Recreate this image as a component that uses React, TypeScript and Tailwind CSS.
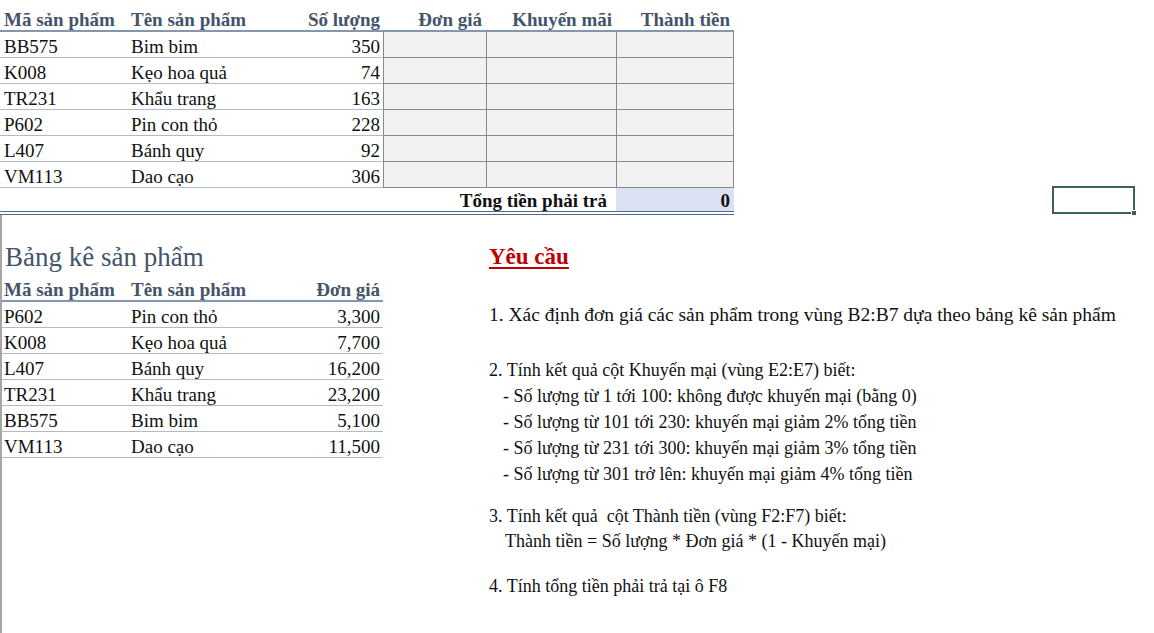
const orders = [
  { code: "BB575", name: "Bim bim", qty: "350" },
  { code: "K008", name: "Kẹo hoa quả", qty: "74" },
  { code: "TR231", name: "Khẩu trang", qty: "163" },
  { code: "P602", name: "Pin con thỏ", qty: "228" },
  { code: "L407", name: "Bánh quy", qty: "92" },
  { code: "VM113", name: "Dao cạo", qty: "306" },
];

const prices = [
  { code: "P602", name: "Pin con thỏ", price: "3,300" },
  { code: "K008", name: "Kẹo hoa quả", price: "7,700" },
  { code: "L407", name: "Bánh quy", price: "16,200" },
  { code: "TR231", name: "Khẩu trang", price: "23,200" },
  { code: "BB575", name: "Bim bim", price: "5,100" },
  { code: "VM113", name: "Dao cạo", price: "11,500" },
];

const rules = [
  "- Số lượng từ 1 tới 100: không được khuyến mại (bằng 0)",
  "- Số lượng từ 101 tới 230: khuyến mại giảm 2% tổng tiền",
  "- Số lượng từ 231 tới 300: khuyến mại giảm 3% tổng tiền",
  "- Số lượng từ 301 trở lên: khuyến mại giảm 4% tổng tiền",
];

function OrderTable() {
  return (
    <div className="w-[734px]">
      <div className="flex h-[32px] items-end border-b-2 border-[#8497b0] font-bold leading-[21px] text-[#44546a]">
        <div className="w-[127px] pl-[4px]">Mã sản phẩm</div>
        <div className="w-[173px] pl-[4px]">Tên sản phẩm</div>
        <div className="w-[83px] pr-[3px] text-right">Số lượng</div>
        <div className="w-[103px] pr-[4px] text-right">Đơn giá</div>
        <div className="w-[130px] pr-[4px] text-right">Khuyến mãi</div>
        <div className="w-[118px] pr-[4px] text-right">Thành tiền</div>
      </div>
      {orders.map((o) => (
        <div key={o.code} className="flex h-[26px] leading-[21px]">
          <div className="flex w-[127px] items-end border-b border-[#b3bac6] pl-[4px]">{o.code}</div>
          <div className="flex w-[173px] items-end border-b border-[#b3bac6] pl-[4px]">{o.name}</div>
          <div className="flex w-[83px] items-end justify-end border-b border-[#b3bac6] pr-[3px]">{o.qty}</div>
          <div className="w-[103px] border-b border-l border-[#8a8a8a] bg-[#f2f2f2]" />
          <div className="w-[130px] border-b border-l border-[#8a8a8a] bg-[#f2f2f2]" />
          <div className="w-[118px] border-x border-b border-[#8a8a8a] bg-[#f2f2f2]" />
        </div>
      ))}
      <div className="flex h-[27px] border-b-4 border-double border-[#4e6a8c] font-bold leading-[21px]">
        <div className="flex w-[616px] items-end justify-end pr-[9px]">Tổng tiền phải trả</div>
        <div className="flex w-[118px] items-end justify-end bg-[#d9e1f2] pr-[4px]">0</div>
      </div>
    </div>
  );
}

function PriceList() {
  return (
    <div className="h-[418px] w-[383px] shrink-0 border-l-2 border-[#a6a6a6]">
      <div className="pl-[3px] pt-[27px] text-[27px] leading-[30px] text-[#44546a]">Bảng kê sản phẩm</div>
      <div className="flex h-[30px] items-end border-b-2 border-[#8497b0] font-bold leading-[21px] text-[#44546a]">
        <div className="w-[125px] pl-[2px]">Mã sản phẩm</div>
        <div className="w-[173px] pl-[4px]">Tên sản phẩm</div>
        <div className="w-[83px] pr-[3px] text-right">Đơn giá</div>
      </div>
      {prices.map((p) => (
        <div key={p.code} className="flex h-[26px] border-b border-[#b3bac6] leading-[21px]">
          <div className="flex w-[125px] items-end pl-[2px]">{p.code}</div>
          <div className="flex w-[173px] items-end pl-[4px]">{p.name}</div>
          <div className="flex w-[83px] items-end justify-end pr-[3px]">{p.price}</div>
        </div>
      ))}
    </div>
  );
}

function Requirements() {
  return (
    <div className="ml-[106px] whitespace-nowrap pt-[27px] text-[18px] leading-[25px]">
      <div className="text-[23px] font-bold leading-[30px] text-[#c00000] underline decoration-2 underline-offset-[3px]">
        Yêu cầu
      </div>
      <div className="mt-[30px] text-[19.5px]">
        1. Xác định đơn giá các sản phẩm trong vùng B2:B7 dựa theo bảng kê sản phẩm
      </div>
      <div className="mt-[31px]">2. Tính kết quả cột Khuyến mại (vùng E2:E7) biết:</div>
      {rules.map((r) => (
        <div key={r} className="pl-[14px] leading-[26px]">{r}</div>
      ))}
      <div className="mt-[17px] whitespace-pre">3. Tính kết quả  cột Thành tiền (vùng F2:F7) biết:</div>
      <div className="pl-[16px]">Thành tiền = Số lượng * Đơn giá * (1 - Khuyến mại)</div>
      <div className="mt-[20px]">4. Tính tổng tiền phải trả tại ô F8</div>
    </div>
  );
}

export default function App() {
  return (
    <div className="relative h-[633px] w-[1154px] overflow-hidden bg-white font-['Liberation_Serif','Times_New_Roman',serif] text-[19px] text-[#111]">
      <OrderTable />
      <div className="flex">
        <PriceList />
        <Requirements />
      </div>

      {/* selected cell */}
      <div className="absolute left-[1052px] top-[186px] h-[28px] w-[83px] border-2 border-[#3b6352]">
        <span className="absolute -bottom-[4px] -right-[4px] h-[6px] w-[6px] border border-white bg-[#3b6352]" />
      </div>
    </div>
  );
}
